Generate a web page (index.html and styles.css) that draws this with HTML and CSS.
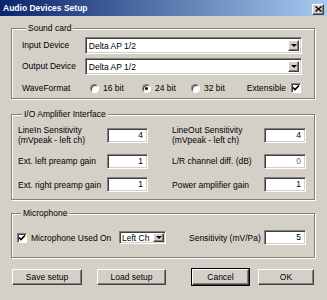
FILE: index.html
```html
<!DOCTYPE HTML>
<html>
<head>
<meta charset="utf-8">
<title>Audio Devices Setup</title>
<link rel="stylesheet" href="styles.css">
</head>

<body>
<div class="window">
	<div class="titlebar">
		<span class="title">Audio Devices Setup</span>
		<span class="close raised"><svg width="7" height="6" viewBox="0 0 7 6"><path d="M0.5 0.5 L6.5 5.5 M6.5 0.5 L0.5 5.5" stroke="#000" stroke-width="1.4"/></svg></span>
	</div>

	<div class="content">
		<div class="group sound">
			<span class="caption">Sound card</span>
			<div class="row dev first">
				<span class="lbl">Input Device</span>
				<div class="field combo wide"><span class="val">Delta AP 1/2</span><span class="arrow raised"><i></i></span></div>
			</div>
			<div class="row dev">
				<span class="lbl">Output Device</span>
				<div class="field combo wide"><span class="val">Delta AP 1/2</span><span class="arrow raised"><i></i></span></div>
			</div>
			<div class="row wave">
				<span class="lbl">WaveFormat</span>
				<span class="opt o1"><span class="radio"></span>16 bit</span>
				<span class="opt o2"><span class="radio on"></span>24 bit</span>
				<span class="opt o3"><span class="radio"></span>32 bit</span>
				<span class="ext">Extensible <span class="check"><svg width="8" height="8" viewBox="0 0 8 8"><path d="M1 3.5 L3 5.5 L7 1.5" fill="none" stroke="#000" stroke-width="1.6"/></svg></span></span>
			</div>
		</div>

		<div class="group amp">
			<span class="caption">I/O Amplifier Interface</span>
			<div class="grid">
				<span class="lbl">LineIn Sensitivity<br>(mVpeak - left ch)</span>
				<span class="field num">4</span>
				<span class="lbl r">LineOut Sensitivity<br>(mVpeak - left ch)</span>
				<span class="field num">4</span>

				<span class="lbl">Ext. left preamp gain</span>
				<span class="field num">1</span>
				<span class="lbl r">L/R channel diff. (dB)</span>
				<span class="field num dim">0</span>

				<span class="lbl">Ext. right preamp gain</span>
				<span class="field num">1</span>
				<span class="lbl r">Power amplifier gain</span>
				<span class="field num">1</span>
			</div>
		</div>

		<div class="group mic">
			<span class="caption">Microphone</span>
			<div class="row microw">
				<span class="micon"><span class="check"><svg width="8" height="8" viewBox="0 0 8 8"><path d="M1 3.5 L3 5.5 L7 1.5" fill="none" stroke="#000" stroke-width="1.6"/></svg></span>Microphone Used On</span>
				<div class="field combo small"><span class="val">Left Ch</span><span class="arrow raised"><i></i></span></div>
				<span class="senslbl">Sensitivity (mV/Pa)</span>
				<span class="field num">5</span>
			</div>
		</div>

		<div class="buttons">
			<span class="btn raised save">Save setup</span>
			<span class="btn raised load">Load setup</span>
			<span class="btn raised cancel">Cancel</span>
			<span class="btn raised ok">OK</span>
		</div>
	</div>
</div>
</body>
</html>
```

FILE: styles.css
```css
* {margin:0; padding:0; box-sizing:border-box;}

body {
	font-family: "Liberation Sans", Arial, sans-serif;
	font-size: 8.5px;
	color: #000;
	background: #d4d0c8;
}

.window {
	width: 327px;
	height: 300px;
	background: #d4d0c8;
	overflow: hidden;
}

.titlebar {
	height: 16px;
	background: linear-gradient(to right, #0a246a, #a6caf0);
	display: flex;
	align-items: center;
	justify-content: space-between;
	padding: 0 3px 0 3px;
}
.title {color: #fff; font-weight: bold; font-size: 8.5px;}
.close {
	width: 12px;
	height: 11px;
	display: flex;
	align-items: center;
	justify-content: center;
	margin-top: 2px;
}

.raised {
	background: #d4d0c8;
	border: 1px solid;
	border-color: #fff #404040 #404040 #fff;
	box-shadow: inset -1px -1px #808080;
}

.field {
	background: #fff;
	border: 1px solid;
	border-color: #808080 #fff #fff #808080;
	box-shadow: inset 1px 1px #404040, inset -1px -1px #d4d0c8;
}

.content {padding: 12px 12px 0 11px;}

/* group boxes */
.group {
	border: 1px solid #808080;
	box-shadow: inset 1px 1px #fff, 1px 1px #fff;
	display: flex;
	flex-direction: column;
}
.caption {
	align-self: flex-start;
	line-height: 10px;
	margin: -6px 0 0 4px;
	padding: 0 2px;
	background: #d4d0c8;
}

.row {display: flex; align-items: center;}

.sound {padding: 0 12px 3px 10px;}
.sound .lbl {width: 63px;}
.dev {height: 16px; margin-top: 5px;}
.dev.first {margin-top: 4px;}
.wave {height: 14px; margin-top: 7px;}

.combo {display: flex; align-items: stretch; padding: 2px;}
.combo .val {flex: 1; padding-left: 1px; line-height: 12px;}
.combo.wide {width: 218px; height: 17px;}
.arrow {
	width: 11px;
	display: flex;
	align-items: center;
	justify-content: center;
}
.arrow i {
	display: block;
	width: 0;
	height: 0;
	border-left: 3px solid transparent;
	border-right: 3px solid transparent;
	border-top: 3px solid #000;
}

.opt {display: flex; align-items: center;}
.o1 {width: 52px; margin-left: 5px;}
.o2 {width: 49px;}
.o3 {width: 50px;}
.radio {
	width: 9px;
	height: 9px;
	border-radius: 50%;
	background: #fff;
	border: 1px solid;
	border-color: #808080 #fff #fff #808080;
	box-shadow: inset 1px 1px #404040;
	margin-right: 4px;
	display: flex;
	align-items: center;
	justify-content: center;
}
.radio.on::after {
	content: "";
	width: 3px;
	height: 3px;
	border-radius: 50%;
	background: #000;
}
.ext {margin-left: auto; display: flex; align-items: center;}
.check {
	width: 10px;
	height: 10px;
	background: #fff;
	border: 1px solid;
	border-color: #808080 #fff #fff #808080;
	box-shadow: inset 1px 1px #404040;
	display: inline-flex;
	align-items: center;
	justify-content: center;
}
.ext .check {margin-left: 5px; margin-right: 1px;}

/* amplifier */
.amp {margin-top: 15px; padding: 0 8px 7px 6px;}
.grid {
	display: grid;
	grid-template-columns: 89px 41px 116px 42px;
	grid-template-rows: 20px 15px 15px;
	row-gap: 8.5px;
	align-items: center;
	margin-top: 6px;
}
.grid .lbl {line-height: 10px;}
.grid .lbl.r {padding-left: 24px;}
.num {
	height: 15px;
	line-height: 13px;
	text-align: right;
	padding-right: 4px;
}
.dim {color: #707070;}

/* microphone */
.mic {margin-top: 13px; padding: 0 8px 12px 5px;}
.microw {height: 15px; margin-top: 12px;}
.micon {width: 102px; display: flex; align-items: center;}
.micon .check {margin-right: 4px;}
.combo.small {width: 47px; height: 13px; padding: 1px;}
.combo.small .val {line-height: 11px;}
.combo.small .arrow {width: 11px;}
.senslbl {margin-left: 23px; width: 75px;}
.mic .num {width: 42px;}

/* buttons */
.buttons {display: flex; margin-top: 11px; padding-left: 1px;}
.btn {
	height: 16px;
	display: flex;
	align-items: center;
	justify-content: center;
}
.save {width: 70px;}
.load {width: 69px; margin-left: 15px;}
.cancel {width: 57px; margin-left: 26px; outline: 1px solid #000;}
.ok {width: 56px; margin-left: 9px;}
```
